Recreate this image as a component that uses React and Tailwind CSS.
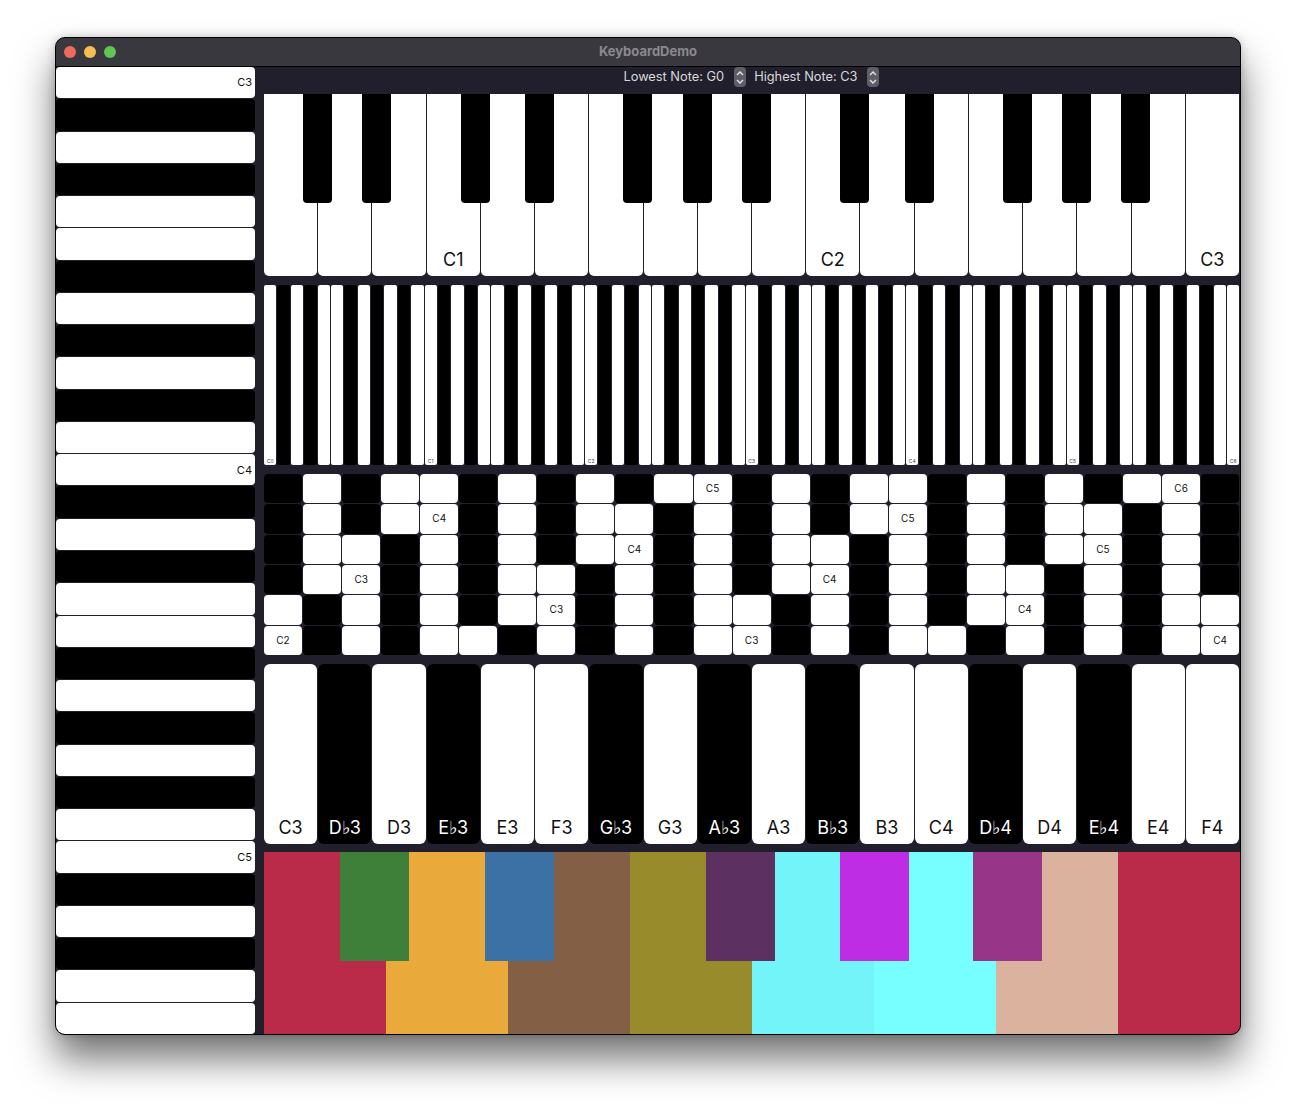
import React from "react";

const FONT = "font-['Inter','Liberation_Sans',sans-serif]";
const PANEL = "bg-[#211f2b]";
const NAMES = ["C", "D♭", "D", "E♭", "E", "F", "G♭", "G", "A♭", "A", "B♭", "B"];
const BLACK = [1, 3, 6, 8, 10];

const isBlack = (note) => BLACK.includes(note % 12);
const noteName = (note) => NAMES[note % 12] + Math.floor(note / 12);
const isC = (note) => note % 12 === 0;
const range = (from, count) => Array.from({ length: count }, (_, i) => from + i);

// note numbers: 0 is C0, so C3 is 36
const TOP_WHITE_LABELS = { 3: "C1", 10: "C2", 17: "C3" };
const TOP_BLACK_LEFT = [39, 98, 197, 261, 359, 419, 478, 576, 641, 739, 798, 857];
const GUITAR_STARTS = [49, 44, 39, 34, 29, 24];

const ROLL_WHITE = ["#b92b49", "#eaa93b", "#825f45", "#978b2c", "#72f4f8", "#77fefe", "#dbb29e", "#b92b49"];
const ROLL_BLACK = [
    { left: 76, color: "#3e8039" },
    { left: 221, color: "#3b71a5" },
    { left: 442, color: "#5c3162" },
    { left: 576, color: "#be2ce4" },
    { left: 709, color: "#973689" },
];

function Stepper() {
    return (
        <span className="flex h-[20px] w-[12px] flex-col items-center justify-center gap-[3px] rounded-[4px] bg-[#5f5e67]">
            <svg width="8" height="5" viewBox="0 0 8 5" fill="none" stroke="#e4e4e6" strokeWidth="1.4">
                <path d="M1 4 L4 1 L7 4" />
            </svg>
            <svg width="8" height="5" viewBox="0 0 8 5" fill="none" stroke="#e4e4e6" strokeWidth="1.4">
                <path d="M1 1 L4 4 L7 1" />
            </svg>
        </span>
    );
}

function TitleBar() {
    return (
        <div className="relative flex h-[29px] shrink-0 items-center border-b border-black bg-[#3a383f] pl-[8px]">
            <div className="flex gap-[8px]">
                <span className="h-[12px] w-[12px] rounded-full bg-[#ee6a5f]" />
                <span className="h-[12px] w-[12px] rounded-full bg-[#f5bf4f]" />
                <span className="h-[12px] w-[12px] rounded-full bg-[#61c554]" />
            </div>
            <div className="absolute inset-0 flex items-center justify-center text-[13px] font-bold text-[#8b898f]">
                KeyboardDemo
            </div>
        </div>
    );
}

function SideKeyboard() {
    return (
        <div className="flex w-[199px] shrink-0 flex-col gap-px">
            {range(36, 30).map((note) => (
                <div
                    key={note}
                    className={`flex min-h-0 flex-1 items-center justify-end rounded-[4px] pr-[3px] text-[11px] text-[#111] ${isBlack(note) ? "bg-black" : "bg-white"}`}
                >
                    {isC(note) && noteName(note)}
                </div>
            ))}
        </div>
    );
}

function Toolbar() {
    return (
        <div className="mr-[2px] mb-[7px] flex h-[20px] shrink-0 items-center justify-center text-[12.8px] text-[#d9d9db]">
            <span>Lowest Note: G0</span>
            <span className="ml-[10px]"><Stepper /></span>
            <span className="ml-[8px]">Highest Note: C3</span>
            <span className="ml-[9px]"><Stepper /></span>
        </div>
    );
}

function PianoKeyboard() {
    return (
        <div className="relative mr-px mb-[9px] flex h-[182px] shrink-0 gap-px">
            {range(0, 18).map((i) => (
                <div key={i} className="flex min-w-0 flex-1 items-end justify-center rounded-b-[5px] bg-white pb-[5px] text-[18px] leading-[22px] text-[#111]">
                    {TOP_WHITE_LABELS[i]}
                </div>
            ))}
            {TOP_BLACK_LEFT.map((left) => (
                <div key={left} className="absolute top-0 h-[109px] w-[29px] rounded-b-[4px] bg-black" style={{ left }} />
            ))}
        </div>
    );
}

function ChromaticKeyboard() {
    return (
        <div className="mr-px mb-[9px] flex h-[180px] shrink-0 gap-px">
            {range(0, 73).map((note) => (
                <div
                    key={note}
                    className={`flex min-w-0 flex-1 items-end justify-center rounded-[2px] pb-px text-[5px] leading-[6px] text-[#444] ${isBlack(note) ? "bg-black" : "bg-white"}`}
                >
                    {isC(note) && noteName(note)}
                </div>
            ))}
        </div>
    );
}

function GuitarGrid() {
    return (
        <div className="mr-px mb-[9px] flex h-[181px] shrink-0 flex-col gap-px">
            {GUITAR_STARTS.map((start) => (
                <div key={start} className="flex min-h-0 flex-1 gap-px">
                    {range(start, 25).map((note) => (
                        <div
                            key={note}
                            className={`flex min-w-0 flex-1 items-center justify-center rounded-[4px] text-[10px] text-[#111] ${isBlack(note) ? "bg-black" : "bg-white"}`}
                        >
                            {isC(note) && noteName(note)}
                        </div>
                    ))}
                </div>
            ))}
        </div>
    );
}

function LabelledKeys() {
    return (
        <div className="mr-px mb-[8px] flex h-[180px] shrink-0 gap-px">
            {range(36, 18).map((note) => (
                <div
                    key={note}
                    className={`flex min-w-0 flex-1 items-end justify-center rounded-[6px] pb-[5px] text-[18px] leading-[22px] ${isBlack(note) ? "bg-black text-white" : "bg-white text-[#111]"}`}
                >
                    {noteName(note)}
                </div>
            ))}
        </div>
    );
}

function ColorRoll() {
    return (
        <div className="relative flex min-h-0 flex-1">
            {ROLL_WHITE.map((color, i) => (
                <div key={i} className="min-w-0 flex-1" style={{ backgroundColor: color }} />
            ))}
            {ROLL_BLACK.map((key) => (
                <div key={key.left} className="absolute top-0 h-[109px] w-[69px]" style={{ left: key.left, backgroundColor: key.color }} />
            ))}
        </div>
    );
}

export default function App() {
    return (
        <div className={`h-[1108px] w-[1296px] bg-white pt-[37px] pl-[55px] ${FONT}`}>
            <div className={`flex h-[998px] w-[1186px] flex-col overflow-hidden rounded-[10px] border border-black shadow-[0_24px_38px_rgba(0,0,0,0.55),0_0_10px_rgba(0,0,0,0.2)] ${PANEL}`}>
                <TitleBar />
                <div className="flex min-h-0 flex-1">
                    <SideKeyboard />
                    <div className="flex min-w-0 flex-1 flex-col pl-[9px]">
                        <Toolbar />
                        <PianoKeyboard />
                        <ChromaticKeyboard />
                        <GuitarGrid />
                        <LabelledKeys />
                        <ColorRoll />
                    </div>
                </div>
            </div>
        </div>
    );
}
